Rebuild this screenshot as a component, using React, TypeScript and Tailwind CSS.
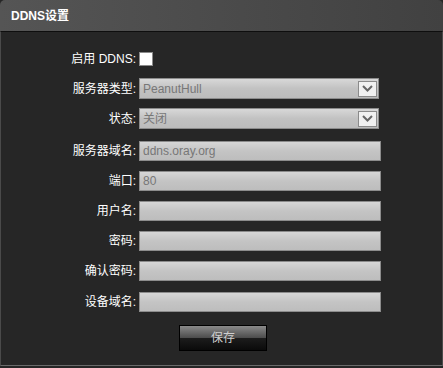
import React from 'react';

const font = { fontFamily: '"Liberation Sans", "Noto Sans CJK SC", Arial, sans-serif' };

function Label({ text }: { text: string }) {
  return (
    <div className="w-[135px] shrink-0 text-right text-[12px] leading-[20px] text-white">{text}</div>
  );
}

function TextField({ value }: { value?: string }) {
  return (
    <div className="ml-[3px] flex h-[20px] w-[242px] items-center border border-[#8c8c8c] bg-gradient-to-b from-[#d6d6d6] via-[#c4c4c4] to-[#bdbdbd] pl-[3px] text-[12px] text-[#777777]">
      {value}
    </div>
  );
}

function SelectField({ value }: { value: string }) {
  return (
    <div className="ml-[3px] flex h-[21px] w-[240px] items-center justify-between border border-[#8c8c8c] bg-gradient-to-b from-[#d8d8d8] via-[#c2c2c2] to-[#bcbcbc] pl-[3px] pr-[1px] text-[12px] text-[#777777]">
      <span>{value}</span>
      <div className="flex h-[16px] w-[19px] items-center justify-center border border-[#8a8a8a] bg-[#f0f0f0]">
        <svg width="11" height="7" viewBox="0 0 11 7">
          <path d="M1 1 L5.5 5.5 L10 1" fill="none" stroke="#666" strokeWidth="2" />
        </svg>
      </div>
    </div>
  );
}

export default function App() {
  return (
    <div className="h-[368px] w-[443px] bg-[#262626]" style={font}>
      <div className="flex h-[31px] items-center rounded-t-[5px] bg-gradient-to-r from-[#555555] to-[#414141] pl-[11px] text-[12px] font-bold text-white">
        DDNS设置
      </div>
      <div className="h-[335px] border-x border-b border-t border-x-[#4a4a4a] border-b-[#6a6a6a] border-t-[#0e0e0e] bg-[#262626] pt-[17px]">
        <div className="flex h-[20px] items-center">
          <Label text="启用 DDNS:" />
          <div className="ml-[3px] h-[14px] w-[14px] border border-[#8a8a8a] bg-white" />
        </div>
        <div className="mt-[9px] flex items-center">
          <Label text="服务器类型:" />
          <SelectField value="PeanutHull" />
        </div>
        <div className="mt-[9px] flex items-center">
          <Label text="状态:" />
          <SelectField value="关闭" />
        </div>
        <div className="mt-[12px] flex items-center">
          <Label text="服务器域名:" />
          <TextField value="ddns.oray.org" />
        </div>
        <div className="mt-[10px] flex items-center">
          <Label text="端口:" />
          <TextField value="80" />
        </div>
        <div className="mt-[10px] flex items-center">
          <Label text="用户名:" />
          <TextField />
        </div>
        <div className="mt-[10px] flex items-center">
          <Label text="密码:" />
          <TextField />
        </div>
        <div className="mt-[10px] flex items-center">
          <Label text="确认密码:" />
          <TextField />
        </div>
        <div className="mt-[11px] flex items-center">
          <Label text="设备域名:" />
          <TextField />
        </div>
        <div className="mt-[13px] flex pl-[178px]">
          <button className="h-[26px] w-[88px] border border-black bg-[linear-gradient(to_bottom,#8a8a8a_0%,#4e4e4e_48%,#1c1c1c_52%,#0a0a0a_100%)] text-[12px] text-[#cfcfcf]">
            保存
          </button>
        </div>
      </div>
    </div>
  );
}
